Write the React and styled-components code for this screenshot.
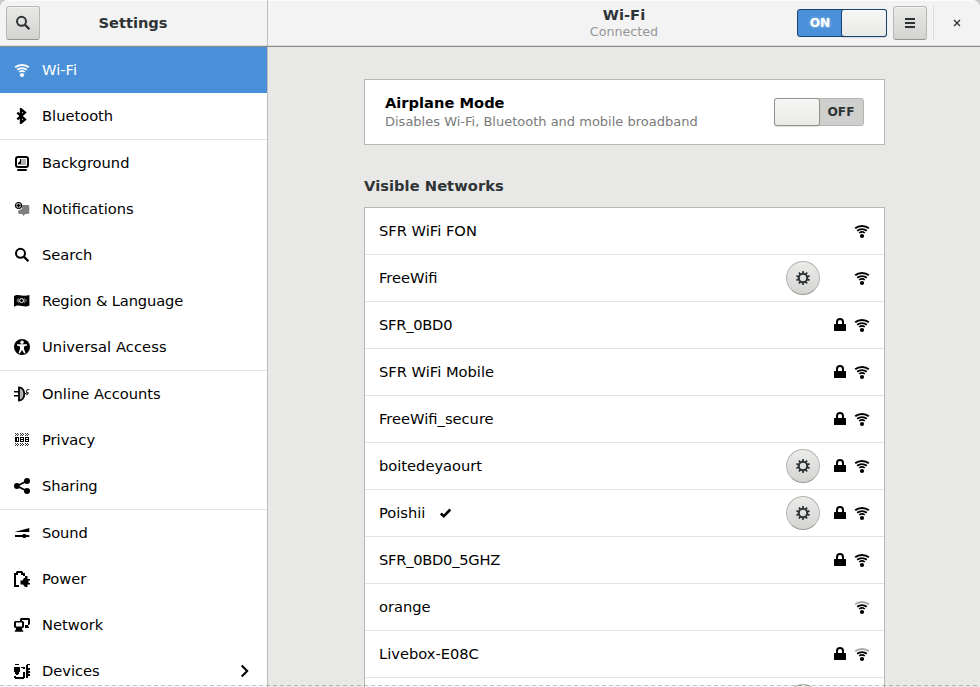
import React from 'react';
import styled, { createGlobalStyle } from 'styled-components';

const Global = createGlobalStyle`
  *, *::before, *::after { box-sizing: border-box; }
  html, body { margin: 0; padding: 0; overflow: hidden; background: #c9c9c7; }
  body { font-family: "DejaVu Sans", sans-serif; font-size: 14.667px; line-height: 18px; color: #000; }
`;

const Window = styled.div`
  position: relative;
  width: 980px;
  height: 687px;
  overflow: hidden;
  display: flex;
  flex-direction: column;
  border-radius: 8px 8px 0 0;
  background: #e8e8e7;
`;

const TitleBar = styled.header`
  flex: none;
  display: flex;
  height: 47px;
  color: #2e3436;
  background: #f3f3f3;
  border-bottom: 1px solid #8b8b87;
  box-shadow: inset 0 1px #fcfcfc, inset 0 -1px #dcdcd9;
`;

const TitleLeft = styled.div`
  width: 268px;
  display: flex;
  align-items: center;
  padding: 0 6px;
  border-right: 1px solid #bdbdba;
`;

const TitleRight = styled.div`
  flex: 1;
  display: grid;
  grid-template-columns: 1fr auto;
  align-items: center;
`;

const AppTitle = styled.h1`
  flex: 1;
  margin: 0 35px 0 0;
  text-align: center;
  font-size: 14.667px;
  line-height: 18px;
  font-weight: bold;
`;

const PageTitle = styled.div`
  padding-left: 183px;
  text-align: center;
  display: flex;
  flex-direction: column;
`;

const Title = styled.span`
  font-size: 14.667px;
  line-height: 15px;
  padding-bottom: 2px;
  font-weight: bold;
`;

const Subtitle = styled.span`
  font-size: 12.7px;
  line-height: 16px;
  color: #949796;
`;

const Controls = styled.div`
  display: flex;
  align-items: center;
  gap: 6px;
`;

const HeaderButton = styled.button`
  width: 34px;
  height: 34px;
  padding: 0;
  display: flex;
  align-items: center;
  justify-content: center;
  color: #2e3436;
  border: 1px solid #b8b8b3;
  border-bottom-color: #94948f;
  border-radius: 3px;
  background: linear-gradient(#e8e8e7, #d3d3d1);
  box-shadow: inset 0 1px #f2f2f1;
`;

const CloseArea = styled.div`
  width: 47px;
  height: 34px;
  display: flex;
  align-items: center;
  justify-content: center;
  border-left: 1px solid #dcdcda;
`;

const Switch = styled.div`
  width: 90px;
  height: 28px;
  flex: none;
  display: flex;
  flex-direction: ${p => (p.$on ? 'row' : 'row-reverse')};
  border: 1px solid ${p => (p.$on ? '#184472' : '#b6b6b3')};
  border-radius: 3px;
  background: ${p => (p.$on ? '#4a90d9' : '#cfcfcd')};
`;

const SwitchLabel = styled.span`
  flex: 1;
  text-align: center;
  font-size: 12.2px;
  line-height: 26px;
  font-weight: bold;
  color: ${p => (p.$on ? '#fff' : '#2e3436')};
  text-shadow: ${p => (p.$on ? '0 0 3px rgba(255,255,255,.6)' : 'none')};
`;

const Knob = styled.span`
  width: 46px;
  margin: -1px;
  border: 1px solid ${p => (p.$on ? '#184472' : '#91918c')};
  border-radius: 3px;
  background: linear-gradient(#f6f6f5, #e9e9e8);
  box-shadow: inset 0 1px #fafafa, 0 1px 1px rgba(0,0,0,.12);
`;

const Body = styled.div`
  flex: 1;
  min-height: 0;
  display: flex;
`;

const Sidebar = styled.nav`
  flex: none;
  width: 268px;
  background: #fff;
  border-right: 1px solid #bdbdba;
`;

const Group = styled.div`
  & + & { border-top: 1px solid #e3e3e2; }
`;

const NavItem = styled.a`
  height: 46px;
  display: flex;
  align-items: center;
  gap: 12px;
  padding: 0 15px 0 14px;
  font-size: 14.667px;
  letter-spacing: ${p => p.$tracking || 0}px;
  color: ${p => (p.$active ? '#fff' : '#000')};
  background: ${p => (p.$active ? '#4a90d9' : 'transparent')};
`;

const NavLabel = styled.span`
  flex: 1;
`;

const Content = styled.main`
  flex: 1;
  padding: 32px 95px 0 96px;
`;

const Card = styled.section`
  height: 66px;
  display: flex;
  align-items: center;
  justify-content: space-between;
  padding: 0 20px;
  background: #fff;
  border: 1px solid #b6b6b3;
`;

const CardText = styled.div`
  display: flex;
  flex-direction: column;
`;

const CardTitle = styled.span`
  font-weight: bold;
  line-height: 18px;
  padding-bottom: 1px;
`;

const CardHint = styled.span`
  font-size: 13px;
  line-height: 17px;
  color: #7a7a7a;
`;

const SectionTitle = styled.h2`
  margin: 32px 0 12px;
  font-size: 14.667px;
  line-height: 18px;
  letter-spacing: 0.05px;
  color: #2e3436;
`;

const NetworkList = styled.ul`
  margin: 0;
  padding: 0;
  list-style: none;
  background: #fff;
  border: 1px solid #b6b6b3;
`;

const NetworkRow = styled.li`
  height: 47px;
  display: flex;
  align-items: center;
  padding: 0 14px;
  border-bottom: 1px solid #e3e3e2;
`;

const NetworkName = styled.span`
  flex: 1;
  display: flex;
  align-items: center;
  gap: 12px;
  letter-spacing: ${p => p.$tracking || 0}px;
`;

const GearButton = styled.button`
  width: 34px;
  height: 34px;
  padding: 0;
  display: flex;
  align-items: center;
  justify-content: center;
  color: #2e3436;
  border: 1px solid #b5b5b1;
  border-bottom-color: #9a9a95;
  border-radius: 50%;
  background: linear-gradient(#ebebea, #d4d4d2);
`;

const LockSlot = styled.span`
  width: 16px;
  height: 16px;
  margin: 0 6px 0 12px;
`;

const CutLine = styled.div`
  position: absolute;
  left: 0;
  right: 0;
  bottom: 1px;
  height: 1px;
  background: repeating-linear-gradient(90deg, rgba(0,0,0,.24) 0 4px, transparent 4px 7px);
`;

const Svg = styled.svg`
  display: block;
  flex: none;
  width: 16px;
  height: 16px;
  fill: currentColor;
`;

const Icon = ({ children, ...rest }) => <Svg viewBox="0 0 16 16" {...rest}>{children}</Svg>;

const Wifi = ({ weak }) => (
  <Icon>
    <g fill="none" stroke="currentColor">
      <path d="M1.2 5.3C4.9 2.1 11.1 2.1 14.8 5.3" strokeWidth="2" opacity={weak ? 0.35 : 1} />
      <path d="M3.2 7.8C5.9 5.5 10.1 5.5 12.8 7.8" strokeWidth="1.8" />
      <path d="M5.2 10C6.8 8.7 9.2 8.7 10.8 10" strokeWidth="1.6" />
    </g>
    <circle cx="8" cy="13" r="2.1" />
  </Icon>
);

const Search = () => (
  <Icon>
    <circle cx="6.5" cy="6.3" r="4.5" fill="none" stroke="currentColor" strokeWidth="2" />
    <path d="M9.8 9.6L14.4 14.2" stroke="currentColor" strokeWidth="2.3" />
  </Icon>
);

const Bluetooth = () => (
  <Icon>
    <path d="M3.3 4.6L11 11.4L7 14.8V1.2L11 4.6L3.3 11.4" fill="none" stroke="currentColor" strokeWidth="2.3" />
  </Icon>
);

const Background = () => (
  <Icon>
    <rect x="2" y="2" width="12" height="10" rx="2" fill="none" stroke="currentColor" strokeWidth="2" />
    <path d="M5 4h7v6H4V9h3V4z" opacity=".32" />
    <path d="M4 9V8l2-2V4h1v5z" />
    <rect x="3" y="14" width="10" height="2" rx="1" />
  </Icon>
);

const Notifications = () => (
  <Icon>
    <path d="M8 4h6.500l.8 1v7l-1 1H11l-1.500 2L8 13H5.200l-1-1V9.500L8 8z" opacity=".5" />
    <circle cx="4.500" cy="4.500" r="3" fill="#fff" stroke="currentColor" strokeWidth="1.200" />
    <path d="M4.500 2.500v4M2.500 4.500h4" stroke="currentColor" strokeWidth="1.500" />
  </Icon>
);

const Region = () => (
  <Icon>
    <path d="M0 3C3 1.300 5 2 8 2.600S13 2.700 15.400 2v10.600c-2.400 1.100-4.400 1-7.400.4s-5-.9-8 .8z" />
    <g fill="none" stroke="#fff">
      <circle cx="7.600" cy="7.600" r="2" strokeWidth="1" />
      <path d="M4.800 5C4.200 7 4.200 8.600 5.100 10.300M10.200 5c.8 2 .8 3.600-.1 5.300M3.300 6v3M12 6v3" strokeWidth=".6" opacity=".8" />
    </g>
  </Icon>
);

const Access = () => (
  <Icon>
    <circle cx="8" cy="8" r="8" />
    <circle cx="8" cy="3.200" r="1.700" fill="#fff" />
    <path d="M3 5.300h10v1.300l-3 .9v2.500l1.500 4-1.300.5L8 10.900l-2.200 3.600-1.300-.5L6 10V7.500l-3-.9z" fill="#fff" />
  </Icon>
);

const Accounts = () => (
  <Icon>
    <path d="M0 5h5v1.600H0zM0 9h5v1.600H0z" />
    <path d="M5.500 2C12 3 12 13 5.500 14z" opacity=".3" />
    <path d="M5 1.500C8 1.500 10.300 4 10.300 8S8 14.500 5 14.500z" fill="none" stroke="currentColor" strokeWidth="1.800" />
    <path d="M15.300 3.500h-1.500L12.500 5v1.200l1.500.3v1L12.500 9" fill="none" stroke="currentColor" strokeWidth="1.100" opacity=".85" />
    <path d="M11 7.500h1.500" stroke="currentColor" />
  </Icon>
);

const dither = [];
for (let g = 0; g < 3; g++)
  for (let y = 0; y < 3; y++)
    for (let x = 0; x < 4; x++)
      if ((x + y) % 2 === 0) dither.push([1 + g * 5 + x, 1 + y], [1 + g * 5 + x, 11 + y]);

const Privacy = () => (
  <Icon shapeRendering="crispEdges">
    {dither.map(([x, y]) => <rect key={`${x}-${y}`} x={x} y={y} width="1" height="1" opacity=".8" />)}
    <path d="M1 5h4v5H1zM6 5h4v5H6zM11 5h4v5h-4z" />
    <path d="M3 6h1v3H3zM7 6h2v1H7zM7 8h2v1H7zM12 6h2v1h-2zM12 8h2v1h-2z" fill="#fff" />
  </Icon>
);

const Sharing = () => (
  <Icon>
    <path d="M13 3L3 8l10 5" fill="none" stroke="currentColor" strokeWidth="1.900" />
    <circle cx="13" cy="3" r="3" /><circle cx="2.900" cy="8" r="2.900" /><circle cx="13" cy="13" r="3" />
  </Icon>
);

const Sound = () => (
  <Icon>
    <path d="M1.300 6.800L15.300 3v4H1.300zM1 10h7.500l.8-1h2l.8 1h3.200v2h-3.200l-.8 1h-2l-.8-1H1z" />
  </Icon>
);

const Power = () => (
  <Icon>
    <path d="M0 2h2V1l1-1h5l1 1v1h2v3H9V4H7V2H4v2H2v10h3v2H0z" />
    <path d="M11 5h2.500v3H16v1.500h-1.500v2.500H16V13.500h-2.500V16H11l-2-2.500H6.500V9.500H8.500L10 7h1z" />
  </Icon>
);

const Network = () => (
  <Icon>
    <path d="M6 2l1-1h8l1 1v5l-1 1h-1l1 3h-4V8h3V3H8v1H6z" />
    <path d="M1 4h8l1 1v5l-1 1H8v1l1.500 2.700h-9L2 12v-1H1l-1-1V5zM2 5.500v4h6v-4z" fillRule="evenodd" />
  </Icon>
);

const Devices = () => (
  <Icon shapeRendering="crispEdges">
    <path d="M1 1h4v1H1zM0 4h6v5H5v2H4v1H2v-1H1V9H0zM0 13h2v1h7v-5h2v6H10v1H1v-1H0zM7 4h4v2H9V5H7zM12 2h1V1h3v1h-2v3h2v2h-2v1h2v2h-2v1h2v2h-2v2h-2z" />
    <path d="M14 5h1v8h-1z" opacity=".4" />
  </Icon>
);

const Lock = () => (
  <Icon>
    <path d="M5 8V5a3 3 0 0 1 6 0v3" fill="none" stroke="currentColor" strokeWidth="2" />
    <rect x="2" y="7" width="12" height="7" rx=".5" />
  </Icon>
);

const teeth = Array.from({ length: 10 }, (_, i) => i * 36);
const Gear = () => (
  <Icon>
    <circle cx="8" cy="8" r="4.200" fill="none" stroke="currentColor" strokeWidth="2" />
    {teeth.map(a => <rect key={a} x="7.100" y="1.100" width="1.800" height="3" transform={`rotate(${a} 8 8)`} />)}
  </Icon>
);

const Menu = () => <Icon shapeRendering="crispEdges"><path d="M3 3h10v2H3zM3 7h10v2H3zM3 11h10v2H3z" /></Icon>;
const Close = () => <Icon><path d="M5 5l6 6M11 5l-6 6" stroke="currentColor" strokeWidth="1.400" /></Icon>;
const Check = () => (
  <Icon><path d="M3.800 8.500L6.800 11.200L13.300 4.500" fill="none" stroke="currentColor" strokeWidth="2.600" /></Icon>
);
const Chevron = () => (
  <Icon><path d="M5.700 2.500L11.200 8L5.700 13.500" fill="none" stroke="currentColor" strokeWidth="2" /></Icon>
);

const groups = [
  [['Wi-Fi', Wifi], ['Bluetooth', Bluetooth]],
  [['Background', Background], ['Notifications', Notifications], ['Search', Search], ['Region & Language', Region, -0.13], ['Universal Access', Access, 0.08]],
  [['Online Accounts', Accounts], ['Privacy', Privacy], ['Sharing', Sharing, -0.1]],
  [['Sound', Sound, -0.1], ['Power', Power], ['Network', Network], ['Devices', Devices]],
];

const networks = [
  { name: 'SFR WiFi FON' },
  { name: 'FreeWifi', gear: true },
  { name: 'SFR_0BD0', lock: true, tracking: -0.25 },
  { name: 'SFR WiFi Mobile', lock: true },
  { name: 'FreeWifi_secure', lock: true },
  { name: 'boitedeyaourt', lock: true, gear: true },
  { name: 'Poishii', lock: true, gear: true, active: true },
  { name: 'SFR_0BD0_5GHZ', lock: true, tracking: -0.26 },
  { name: 'orange', weak: true },
  { name: 'Livebox-E08C', lock: true, weak: true },
  { name: '', gear: true, lock: true, weak: true },
];

export default function App() {
  return (
    <>
      <Global />
      <Window>
        <TitleBar>
          <TitleLeft>
            <HeaderButton><Search /></HeaderButton>
            <AppTitle>Settings</AppTitle>
          </TitleLeft>
          <TitleRight>
            <PageTitle>
              <Title>Wi-Fi</Title>
              <Subtitle>Connected</Subtitle>
            </PageTitle>
            <Controls>
              <Switch $on><SwitchLabel $on>ON</SwitchLabel><Knob $on /></Switch>
              <HeaderButton><Menu /></HeaderButton>
              <CloseArea><Close /></CloseArea>
            </Controls>
          </TitleRight>
        </TitleBar>
        <Body>
          <Sidebar>
            {groups.map((items, g) => (
              <Group key={g}>
                {items.map(([label, Glyph, tracking]) => (
                  <NavItem key={label} $active={label === 'Wi-Fi'} $tracking={tracking}>
                    <Glyph />
                    <NavLabel>{label}</NavLabel>
                    {label === 'Devices' && <Chevron />}
                  </NavItem>
                ))}
              </Group>
            ))}
          </Sidebar>
          <Content>
            <Card>
              <CardText>
                <CardTitle>Airplane Mode</CardTitle>
                <CardHint>Disables Wi-Fi, Bluetooth and mobile broadband</CardHint>
              </CardText>
              <Switch><SwitchLabel>OFF</SwitchLabel><Knob /></Switch>
            </Card>
            <SectionTitle>Visible Networks</SectionTitle>
            <NetworkList>
              {networks.map((n, i) => (
                <NetworkRow key={i}>
                  <NetworkName $tracking={n.tracking}>{n.name}{n.active && <Check />}</NetworkName>
                  {n.gear && <GearButton><Gear /></GearButton>}
                  <LockSlot>{n.lock && <Lock />}</LockSlot>
                  <Wifi weak={n.weak} />
                </NetworkRow>
              ))}
            </NetworkList>
          </Content>
        </Body>
        <CutLine />
      </Window>
    </>
  );
}
